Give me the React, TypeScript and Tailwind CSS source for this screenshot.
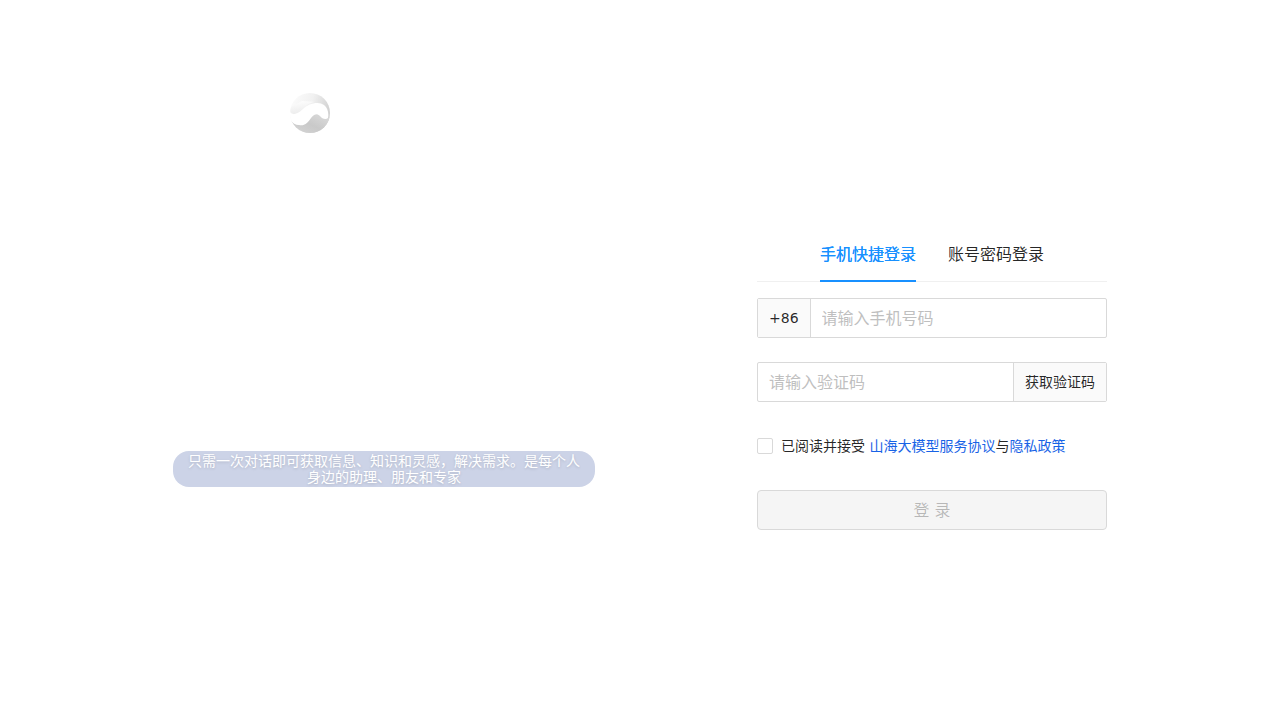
import { useState } from "react";

function Logo() {
  return (
    <svg viewBox="0 0 40 40" className="size-10" role="img" aria-label="山海">
      <defs>
        <clipPath id="disc">
          <circle cx="20" cy="20" r="20" />
        </clipPath>
        <linearGradient id="upper" x1="0" y1="0.2" x2="1" y2="0.5">
          <stop offset="0" stopColor="#fcfcfc" />
          <stop offset="0.5" stopColor="#f1f1f1" />
          <stop offset="1" stopColor="#cfcfcf" />
        </linearGradient>
        <linearGradient id="lower" x1="0" y1="1" x2="1" y2="0">
          <stop offset="0" stopColor="#d8d8d8" />
          <stop offset="0.5" stopColor="#c9c9c9" />
          <stop offset="1" stopColor="#dedede" />
        </linearGradient>
        <linearGradient id="shade" x1="0" y1="0" x2="0.3" y2="1">
          <stop offset="0" stopColor="#ffffff" />
          <stop offset="1" stopColor="#ececec" />
        </linearGradient>
      </defs>
      <g clipPath="url(#disc)">
        <rect width="40" height="40" fill="url(#upper)" />
        <path d="M0 27C8 34 15 33 19 27C22 22 25 20 29 22C33 25 35 27 40 24L42 42H0Z" fill="url(#lower)" />
        <path d="M0 18C2 23 8 21 13 16C17 11 21 9 26 9L12 8L1 14Z" fill="url(#shade)" />
        <path
          d="M-1 19C3 23 8 21 13 16C19 10 29 8 34 12C38 15 39 21 38 25C36 27 32 26 30 23C27 20 24 21 21 25C17 31 14 33 9 32C5 32 2 30-1 25Z"
          fill="#fff"
        />
      </g>
    </svg>
  );
}

export default function App() {
  const [tab, setTab] = useState("phone");
  const tabs = [
    { id: "phone", label: "手机快捷登录" },
    { id: "account", label: "账号密码登录" },
  ];

  return (
    <main className="mx-auto flex min-h-screen w-full max-w-[966px] items-start justify-between gap-8 bg-white px-4 font-['DejaVu_Sans','Noto_Sans_CJK_SC',sans-serif] text-sm text-black/85">
      <section className="flex w-full max-w-[422px] flex-col pt-[93px]">
        <div className="pl-[117px]">
          <Logo />
        </div>
        <p className="mt-[318px] rounded-2xl bg-[#ccd3e7] px-3 py-0.5 text-center leading-4 text-white text-shadow-[0_1px_3px_rgb(0_0_0/0.15)]">
          只需一次对话即可获取信息、知识和灵感，解决需求。是每个人身边的助理、朋友和专家
        </p>
      </section>

      <form className="w-full max-w-[350px] pt-[230px]" onSubmit={(e) => e.preventDefault()}>
        <div role="tablist" className="flex justify-center gap-8 border-b border-[#f0f0f0] text-base">
          {tabs.map((t) => (
            <button
              key={t.id}
              type="button"
              role="tab"
              aria-selected={tab === t.id}
              onClick={() => setTab(t.id)}
              className={
                tab === t.id
                  ? "-mb-px h-[52px] border-b-2 border-[#1890ff] text-[#1890ff] text-shadow-[0_0_0.25px_currentColor]"
                  : "-mb-px h-[52px] border-b-2 border-transparent"
              }
            >
              {t.label}
            </button>
          ))}
        </div>

        <div className="mt-4 flex h-10 rounded-xs border border-[#d9d9d9]">
          <label htmlFor="phone" className="flex items-center border-r border-[#d9d9d9] bg-[#fafafa] px-[11px]">
            +86
          </label>
          <input
            id="phone"
            type="tel"
            placeholder="请输入手机号码"
            className="min-w-0 flex-1 px-[11px] pt-0.5 text-base outline-none placeholder:text-[#bfbfbf]"
          />
        </div>

        <div className="mt-6 flex h-10 rounded-xs border border-[#d9d9d9]">
          <input
            type="text"
            aria-label="验证码"
            placeholder="请输入验证码"
            className="min-w-0 flex-1 px-[11px] pt-0.5 text-base outline-none placeholder:text-[#bfbfbf]"
          />
          <button type="button" className="border-l border-[#d9d9d9] bg-[#fafafa] px-[11px]">
            获取验证码
          </button>
        </div>

        <div className="mt-8 flex h-6 items-center gap-2">
          <input
            id="agree"
            type="checkbox"
            className="size-4 shrink-0 appearance-none rounded-xs border border-[#d9d9d9] bg-white checked:border-[#1890ff] checked:bg-[#1890ff]"
          />
          <div className="whitespace-nowrap">
            <label htmlFor="agree">已阅读并接受 </label>
            <a href="#agreement" className="text-[#1863e6]">山海大模型服务协议</a>
            与
            <a href="#privacy" className="text-[#1863e6]">隐私政策</a>
          </div>
        </div>

        <button
          type="submit"
          disabled
          className="mt-8 h-10 w-full rounded-sm border border-[#d9d9d9] bg-[#f5f5f5] pt-0.5 text-base text-black/25"
        >
          登 录
        </button>
      </form>
    </main>
  );
}
